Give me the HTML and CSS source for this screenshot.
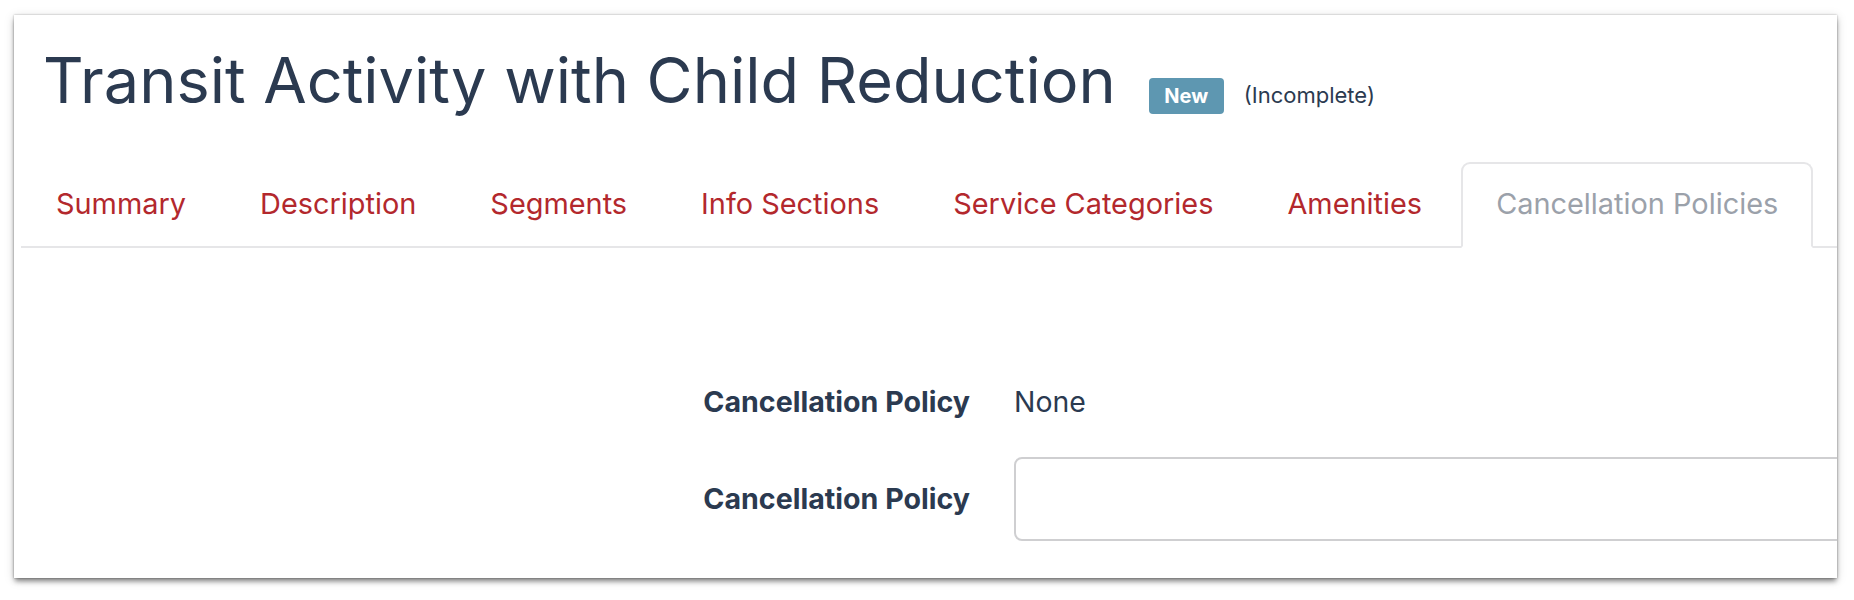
FILE: index.html
```html
<!DOCTYPE html>
<html>
<head>
<meta charset="utf-8">
<link rel="stylesheet" href="styles.css">
</head>
<body>
<div class="window">
  <header class="page-header">
    <h1 class="title">Transit Activity with Child Reduction</h1>
    <span class="badge">New</span>
    <span class="status">(Incomplete)</span>
  </header>
  <ul class="tabs">
    <li class="tab"><a>Summary</a></li>
    <li class="tab"><a>Description</a></li>
    <li class="tab"><a>Segments</a></li>
    <li class="tab"><a>Info Sections</a></li>
    <li class="tab"><a>Service Categories</a></li>
    <li class="tab"><a>Amenities</a></li>
    <li class="tab active"><a>Cancellation Policies</a></li>
  </ul>
  <form class="form">
    <div class="row">
      <label class="label">Cancellation Policy</label>
      <div class="value">None</div>
    </div>
    <div class="row">
      <label class="label">Cancellation Policy</label>
      <input class="input" type="text">
    </div>
  </form>
</div>
</body>
</html>
```
FILE: styles.css
```css
html, body {
  margin: 0;
  background: #ffffff;
}
body {
  box-sizing: border-box;
  min-height: 600px;
  padding: 15px 0 22px 14px;
  font-family: "Inter", "Open Sans", sans-serif;
  color: #2b3a50;
}
.window {
  width: 1823px;
  height: 563px;
  background: #ffffff;
  overflow: hidden;
  box-shadow: 0 4px 5px -1px rgba(0, 0, 0, 0.45), 0 2px 10px rgba(0, 0, 0, 0.15), 0 0 2px rgba(0, 0, 0, 0.3);
}
.page-header {
  display: flex;
  align-items: baseline;
  padding: 27px 0 0 29px;
}
.title {
  margin: 0;
  font-size: 63px;
  line-height: 76px;
  font-weight: 400;
  color: #2b3a50;
}
.badge {
  margin-left: 33px;
  padding: 8px 0;
  width: 75px;
  text-align: center;
  font-size: 20px;
  line-height: 20px;
  font-weight: 700;
  color: #ffffff;
  background: #5e97b1;
  border-radius: 4px;
}
.status {
  margin-left: 20px;
  font-size: 22px;
  line-height: 22px;
  color: #2b3a50;
}
.tabs {
  display: flex;
  list-style: none;
  margin: 44px 0 0 7px;
  padding: 0;
  border-bottom: 2px solid #e6e6e8;
}
.tab {
  margin: 0 4px -2px 0;
}
.tab a {
  display: block;
  padding: 25px 33px 28px;
  font-size: 28.9px;
  line-height: 29px;
  color: #b3282d;
  border: 2px solid transparent;
  border-radius: 9px 9px 0 0;
  white-space: nowrap;
}
.tab.active a {
  color: #9ba1aa;
  background: #ffffff;
  border-color: #e6e6e8 #e6e6e8 #ffffff;
}
.form {
  display: flex;
  flex-direction: column;
  gap: 35px;
  margin-top: 134px;
}
.row {
  display: grid;
  grid-template-columns: 956px 1fr;
  column-gap: 44px;
  align-items: center;
}
.label {
  text-align: right;
  font-size: 28.6px;
  line-height: 40px;
  font-weight: 700;
  color: #2b3a50;
}
.value {
  font-size: 28.4px;
  line-height: 40px;
  color: #2b3a50;
}
.input {
  box-sizing: border-box;
  width: calc(100% + 60px);
  height: 84px;
  margin: 0;
  border: 2px solid #cfcfd1;
  border-radius: 8px;
  background: #ffffff;
  font: inherit;
}
```
